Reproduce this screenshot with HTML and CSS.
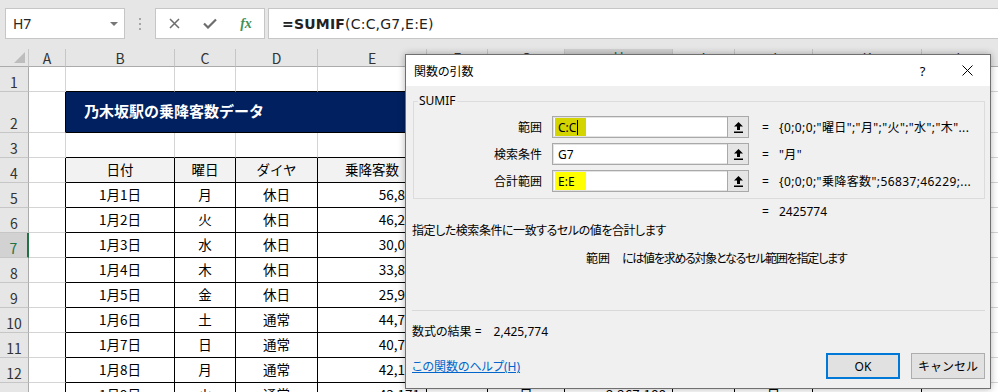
FILE: index.html
```html
<!DOCTYPE html>
<html lang="ja">

<head>
    <meta charset="UTF-8">
    <meta name="viewport" content="width=device-width, initial-scale=1.0">
    <title>関数の引数</title>

    <link rel="stylesheet" href="styles.css">
</head>

<body>
    <div class="bar">
        <div class="namebox">
            <span>H7</span>
            <span class="drop"></span>
        </div>
        <div class="grip"><i></i><i></i><i></i></div>
        <div class="fxbtns">
            <span><svg width="11" height="11" viewBox="0 0 11 11"><path d="M1 1L10 10M10 1L1 10" stroke="#6d6d6d" stroke-width="1.5" fill="none"/></svg></span>
            <span><svg width="14" height="11" viewBox="0 0 14 11"><path d="M1 5.5L5 9.5L13 1.5" stroke="#6d6d6d" stroke-width="2.2" fill="none"/></svg></span>
            <span class="fx">fx</span>
        </div>
        <div class="formula"><b>=SUMIF</b>(C:C,G7,E:E)</div>
    </div>

    <div class="sheet">
        <div class="row hd">
            <span class="corner"><i></i></span>
            <span>A</span><span>B</span><span>C</span><span>D</span><span>E</span><span>F</span><span>G</span>
            <span class="sel">H</span><span>I</span><span>J</span><span>K</span><span>L</span>
        </div>
        <div class="row">
            <span class="rh">1</span><span></span>
            <span class="tt"></span><span class="tt"></span><span class="tt"></span><span class="tt"></span>
            <span class="tt"></span><span class="tt"></span><span class="tt"></span>
            <span></span><span></span><span></span><span></span>
        </div>
        <div class="row tall">
            <span class="rh">2</span><span class="tl"></span>
            <span class="title">乃木坂駅の乗降客数データ</span>
            <span></span><span></span><span></span><span></span>
        </div>
        <div class="row">
            <span class="rh">3</span><span></span>
            <span class="tt"></span><span class="tt"></span><span class="tt"></span><span class="tt"></span>
            <span></span><span></span><span></span><span></span><span></span><span></span><span></span>
        </div>
        <div class="row">
            <span class="rh">4</span><span class="tl"></span>
            <span class="t th">日付</span><span class="t th">曜日</span><span class="t th">ダイヤ</span><span class="t th">乗降客数</span>
            <span></span><span></span><span></span><span></span><span></span><span></span><span></span>
        </div>
        <div class="row">
            <span class="rh">5</span><span class="tl"></span>
            <span class="t">1月1日</span><span class="t">月</span><span class="t">休日</span><span class="t num">56,837</span>
            <span></span><span></span><span></span><span></span><span></span><span></span><span></span>
        </div>
        <div class="row">
            <span class="rh">6</span><span class="tl"></span>
            <span class="t">1月2日</span><span class="t">火</span><span class="t">休日</span><span class="t num">46,229</span>
            <span></span><span></span><span></span><span></span><span></span><span></span><span></span>
        </div>
        <div class="row">
            <span class="rh sel">7</span><span class="tl"></span>
            <span class="t">1月3日</span><span class="t">水</span><span class="t">休日</span><span class="t num">30,052</span>
            <span></span><span></span><span></span><span></span><span></span><span></span><span></span>
        </div>
        <div class="row">
            <span class="rh">8</span><span class="tl"></span>
            <span class="t">1月4日</span><span class="t">木</span><span class="t">休日</span><span class="t num">33,819</span>
            <span></span><span></span><span></span><span></span><span></span><span></span><span></span>
        </div>
        <div class="row">
            <span class="rh">9</span><span class="tl"></span>
            <span class="t">1月5日</span><span class="t">金</span><span class="t">休日</span><span class="t num">25,934</span>
            <span></span><span></span><span></span><span></span><span></span><span></span><span></span>
        </div>
        <div class="row">
            <span class="rh">10</span><span class="tl"></span>
            <span class="t">1月6日</span><span class="t">土</span><span class="t">通常</span><span class="t num">44,706</span>
            <span></span><span></span><span></span><span></span><span></span><span></span><span></span>
        </div>
        <div class="row">
            <span class="rh">11</span><span class="tl"></span>
            <span class="t">1月7日</span><span class="t">日</span><span class="t">通常</span><span class="t num">40,752</span>
            <span></span><span></span><span></span><span></span><span></span><span></span><span></span>
        </div>
        <div class="row">
            <span class="rh">12</span><span class="tl"></span>
            <span class="t">1月8日</span><span class="t">月</span><span class="t">通常</span><span class="t num">42,158</span>
            <span></span><span></span><span></span><span></span><span></span><span></span><span></span>
        </div>
        <div class="row">
            <span class="rh">13</span><span class="tl"></span>
            <span class="t">1月9日</span><span class="t">火</span><span class="t">通常</span><span class="t num">43,171</span>
            <span class="t"></span><span class="t">日</span><span class="t num">2,267,188</span><span class="t"></span>
            <span class="t">日</span><span class="t"></span><span></span>
        </div>
    </div>

    <div class="dialog">
        <div class="dlg-head">
            <h1>関数の引数</h1>
            <span class="hbtn">?</span>
            <span class="hbtn"><svg width="11" height="11" viewBox="0 0 11 11"><path d="M0.5 0.5L10.5 10.5M10.5 0.5L0.5 10.5" stroke="#000" stroke-width="1" fill="none"/></svg></span>
        </div>
        <div class="dlg-body">
            <fieldset>
                <legend>SUMIF</legend>
                <div class="arg">
                    <label>範囲</label>
                    <div class="field">
                        <span class="in"><mark class="on">C:C<i class="caret"></i></mark></span>
                        <span class="pick"><svg width="9" height="11" viewBox="0 0 9 11"><path d="M4.5 0L9 4.5H6V8H3V4.5H0Z" fill="#000"/><rect x="0" y="9.5" width="9" height="1.5" fill="#000"/></svg></span>
                    </div>
                    <span class="eq">=</span>
                    <span class="val">{0;0;0;"曜日";"月";"火";"水";"木"...</span>
                </div>
                <div class="arg">
                    <label>検索条件</label>
                    <div class="field">
                        <span class="in">G7</span>
                        <span class="pick"><svg width="9" height="11" viewBox="0 0 9 11"><path d="M4.5 0L9 4.5H6V8H3V4.5H0Z" fill="#000"/><rect x="0" y="9.5" width="9" height="1.5" fill="#000"/></svg></span>
                    </div>
                    <span class="eq">=</span>
                    <span class="val">"月"</span>
                </div>
                <div class="arg">
                    <label>合計範囲</label>
                    <div class="field">
                        <span class="in"><mark>E:E</mark></span>
                        <span class="pick"><svg width="9" height="11" viewBox="0 0 9 11"><path d="M4.5 0L9 4.5H6V8H3V4.5H0Z" fill="#000"/><rect x="0" y="9.5" width="9" height="1.5" fill="#000"/></svg></span>
                    </div>
                    <span class="eq">=</span>
                    <span class="val">{0;0;0;"乗降客数";56837;46229;...</span>
                </div>
            </fieldset>

            <div class="result"><span class="eq">=</span><span>2425774</span></div>
            <p class="desc">指定した検索条件に一致するセルの値を合計します</p>
            <p class="argdesc"><span>範囲</span>には値を求める対象となるセル範囲を指定します</p>

            <div class="sep"></div>

            <p class="total">数式の結果 =<span>2,425,774</span></p>

            <div class="foot">
                <a href="#">この関数のヘルプ(H)</a>
                <button class="ok">OK</button>
                <button>キャンセル</button>
            </div>
        </div>
    </div>
</body>

</html>
```

FILE: styles.css
```css
* {
    padding: 0;
    margin: 0;
    box-sizing: border-box;
}

body {
    width: 998px;
    height: 392px;
    overflow: hidden;
    position: relative;
    background: #fff;
    font-family: "Noto Sans CJK JP", sans-serif;
}

/* formula bar */

.bar {
    height: 49px;
    background: #e6e6e6;
    display: flex;
    align-items: flex-start;
    padding: 8px 0 0 5px;
}

.namebox {
    width: 120px;
    height: 31px;
    background: #fff;
    border: 1px solid #c6c6c6;
    display: flex;
    align-items: center;
    justify-content: space-between;
    padding: 0 6px 0 7px;
    font-family: "Noto Sans", sans-serif;
    font-size: 14px;
    color: #262626;
}

.drop {
    width: 0;
    height: 0;
    border-left: 4px solid transparent;
    border-right: 4px solid transparent;
    border-top: 4px solid #777;
}

.grip {
    width: 30px;
    height: 31px;
    display: flex;
    flex-direction: column;
    align-items: center;
    justify-content: center;
    gap: 3px;
}

.grip i {
    width: 2px;
    height: 2px;
    background: #a6a6a6;
}

.fxbtns {
    width: 110px;
    height: 31px;
    background: #fff;
    border: 1px solid #c6c6c6;
    display: flex;
}

.fxbtns span {
    width: 36px;
    display: flex;
    align-items: center;
    justify-content: center;
}

.fx {
    font-family: "Liberation Serif", serif;
    font-style: italic;
    font-weight: bold;
    font-size: 14px;
    color: #3f9157;
}

.formula {
    flex: 1;
    margin-left: 3px;
    height: 31px;
    background: #fff;
    border: 1px solid #c6c6c6;
    border-right: none;
    padding-left: 13px;
    display: flex;
    align-items: center;
    font-family: "DejaVu Sans", sans-serif;
    font-size: 14px;
    letter-spacing: 0.2px;
    color: #222;
}

/* sheet */

.row {
    display: grid;
    grid-template-columns: 29px 37px 109px 61px 82px 109px 61px 77px 108px 62px 78px 109px 77px;
    height: 25px;
    font-size: 13.5px;
    color: #000;
}

.row > span {
    border-right: 1px solid #d4d4d4;
    border-bottom: 1px solid #d4d4d4;
    display: flex;
    align-items: center;
    justify-content: center;
    padding-bottom: 3px;
    white-space: nowrap;
    overflow: hidden;
}

.tall {
    height: 41px;
}

.hd {
    height: 18px;
    background: #e6e6e6;
}

.hd > span {
    border-right-color: #c6c6c6;
    border-bottom-color: #ababab;
    align-items: flex-end;
    padding-bottom: 0;
    font-size: 14px;
    line-height: 16px;
    color: #333;
}

.hd > .sel {
    background: #d2d2d2;
    color: #217346;
    border-bottom: 2px solid #217346;
}

.hd > .corner {
    justify-content: flex-end;
    padding: 0 3px 3px 0;
}

.corner i {
    width: 0;
    height: 0;
    border-left: 11px solid transparent;
    border-bottom: 11px solid #bdbdbd;
}

.row > .rh {
    background: #e6e6e6;
    border-right-color: #ababab;
    border-bottom-color: #c6c6c6;
    align-items: flex-end;
    padding-bottom: 1px;
    font-size: 14px;
    line-height: 16px;
    color: #333;
}

.row > .rh.sel {
    background: #d2d2d2;
    color: #217346;
    border-right: 2px solid #217346;
}

.row > .tt {
    border-bottom-color: #000;
}

.row > .tl {
    border-right-color: #000;
}

.row > .t {
    border-right-color: #000;
    border-bottom-color: #000;
}

.row > .th {
    background: #f2f2f2;
}

.row > .num {
    justify-content: flex-end;
    padding-right: 6px;
}

.row > .title {
    grid-column: span 7;
    background: #002060;
    color: #fff;
    font-weight: bold;
    font-size: 15px;
    justify-content: flex-start;
    padding-left: 18px;
    border-right-color: #000;
    border-bottom-color: #000;
}

/* dialog */

.dialog {
    position: absolute;
    left: 405px;
    top: 54px;
    width: 586px;
    height: 335px;
    background: #f0f0f0;
    border: 1px solid #707070;
    box-shadow: 0 0 7px rgba(0, 0, 0, 0.3);
    display: flex;
    flex-direction: column;
    font-family: "Noto Sans", "Noto Sans CJK JP", sans-serif;
    font-size: 12px;
    font-feature-settings: "palt";
    color: #000;
}

.dlg-head {
    height: 31px;
    background: #fff;
    display: flex;
    align-items: center;
    padding-left: 8px;
}

.dlg-head h1 {
    flex: 1;
    font-size: 12px;
    font-weight: normal;
}

.hbtn {
    width: 45px;
    display: flex;
    justify-content: center;
    font-size: 13px;
}

.dlg-body {
    flex: 1;
    padding: 0 5px 8px 6px;
    display: flex;
    flex-direction: column;
}

fieldset {
    margin: 7px 0 0 1px;
    border: 1px solid #dcdcdc;
    padding: 7px 0 6px 4px;
}

legend {
    padding: 0 1px;
    line-height: 16px;
}

.arg {
    display: flex;
    align-items: center;
    height: 22px;
    margin-bottom: 5px;
}

.arg:last-child {
    margin-bottom: 0;
}

.arg label {
    width: 124px;
    margin-right: 10px;
    text-align: right;
}

.field {
    width: 197px;
    height: 22px;
    display: flex;
    background: #fff;
    border: 1px solid #a9a9a9;
    box-shadow: inset 0 0 0 1px #e3e3e3;
}

.field .in {
    flex: 1;
    display: flex;
    align-items: center;
    padding-left: 5px;
}

.field mark {
    align-self: stretch;
    margin: 1px 0 1px -3px;
    width: 31px;
    padding-left: 3px;
    display: flex;
    align-items: center;
    background: #ffff00;
    color: #000;
}

.field mark.on {
    background: #d4d400;
}

.caret {
    width: 1px;
    height: 15px;
    margin-left: 1px;
    background: #000;
}

.pick {
    width: 21px;
    display: flex;
    align-items: center;
    justify-content: center;
    background: #e5e5e5;
    border-left: 1px solid #a9a9a9;
}

.eq {
    margin-left: 13px;
    width: 17px;
}

.val {
    white-space: nowrap;
    letter-spacing: 0.4px;
}

.result {
    margin-top: 5px;
    padding-left: 337px;
    display: flex;
    line-height: 16px;
}

.desc {
    margin-top: 3px;
    line-height: 16px;
    letter-spacing: -0.45px;
}

.argdesc {
    margin-top: 12px;
    padding-left: 174px;
    line-height: 16px;
    letter-spacing: -1.25px;
}

.argdesc span {
    margin-right: 12px;
    letter-spacing: 0;
}

.sep {
    margin-top: 43px;
    border-top: 1px solid #d9d9d9;
}

.total {
    margin-top: 13px;
    line-height: 16px;
}

.total span {
    margin-left: 12px;
}

.foot {
    margin-top: 13px;
    display: flex;
    align-items: center;
}

.foot a {
    flex: 1;
    color: #0066cc;
    text-decoration: underline;
}

.foot button {
    width: 74px;
    height: 26px;
    margin-left: 11px;
    background: #e1e1e1;
    border: 1px solid #adadad;
    font-family: inherit;
    font-size: 12px;
    color: #000;
}

.foot .ok {
    border: 2px solid #0078d7;
}
```
